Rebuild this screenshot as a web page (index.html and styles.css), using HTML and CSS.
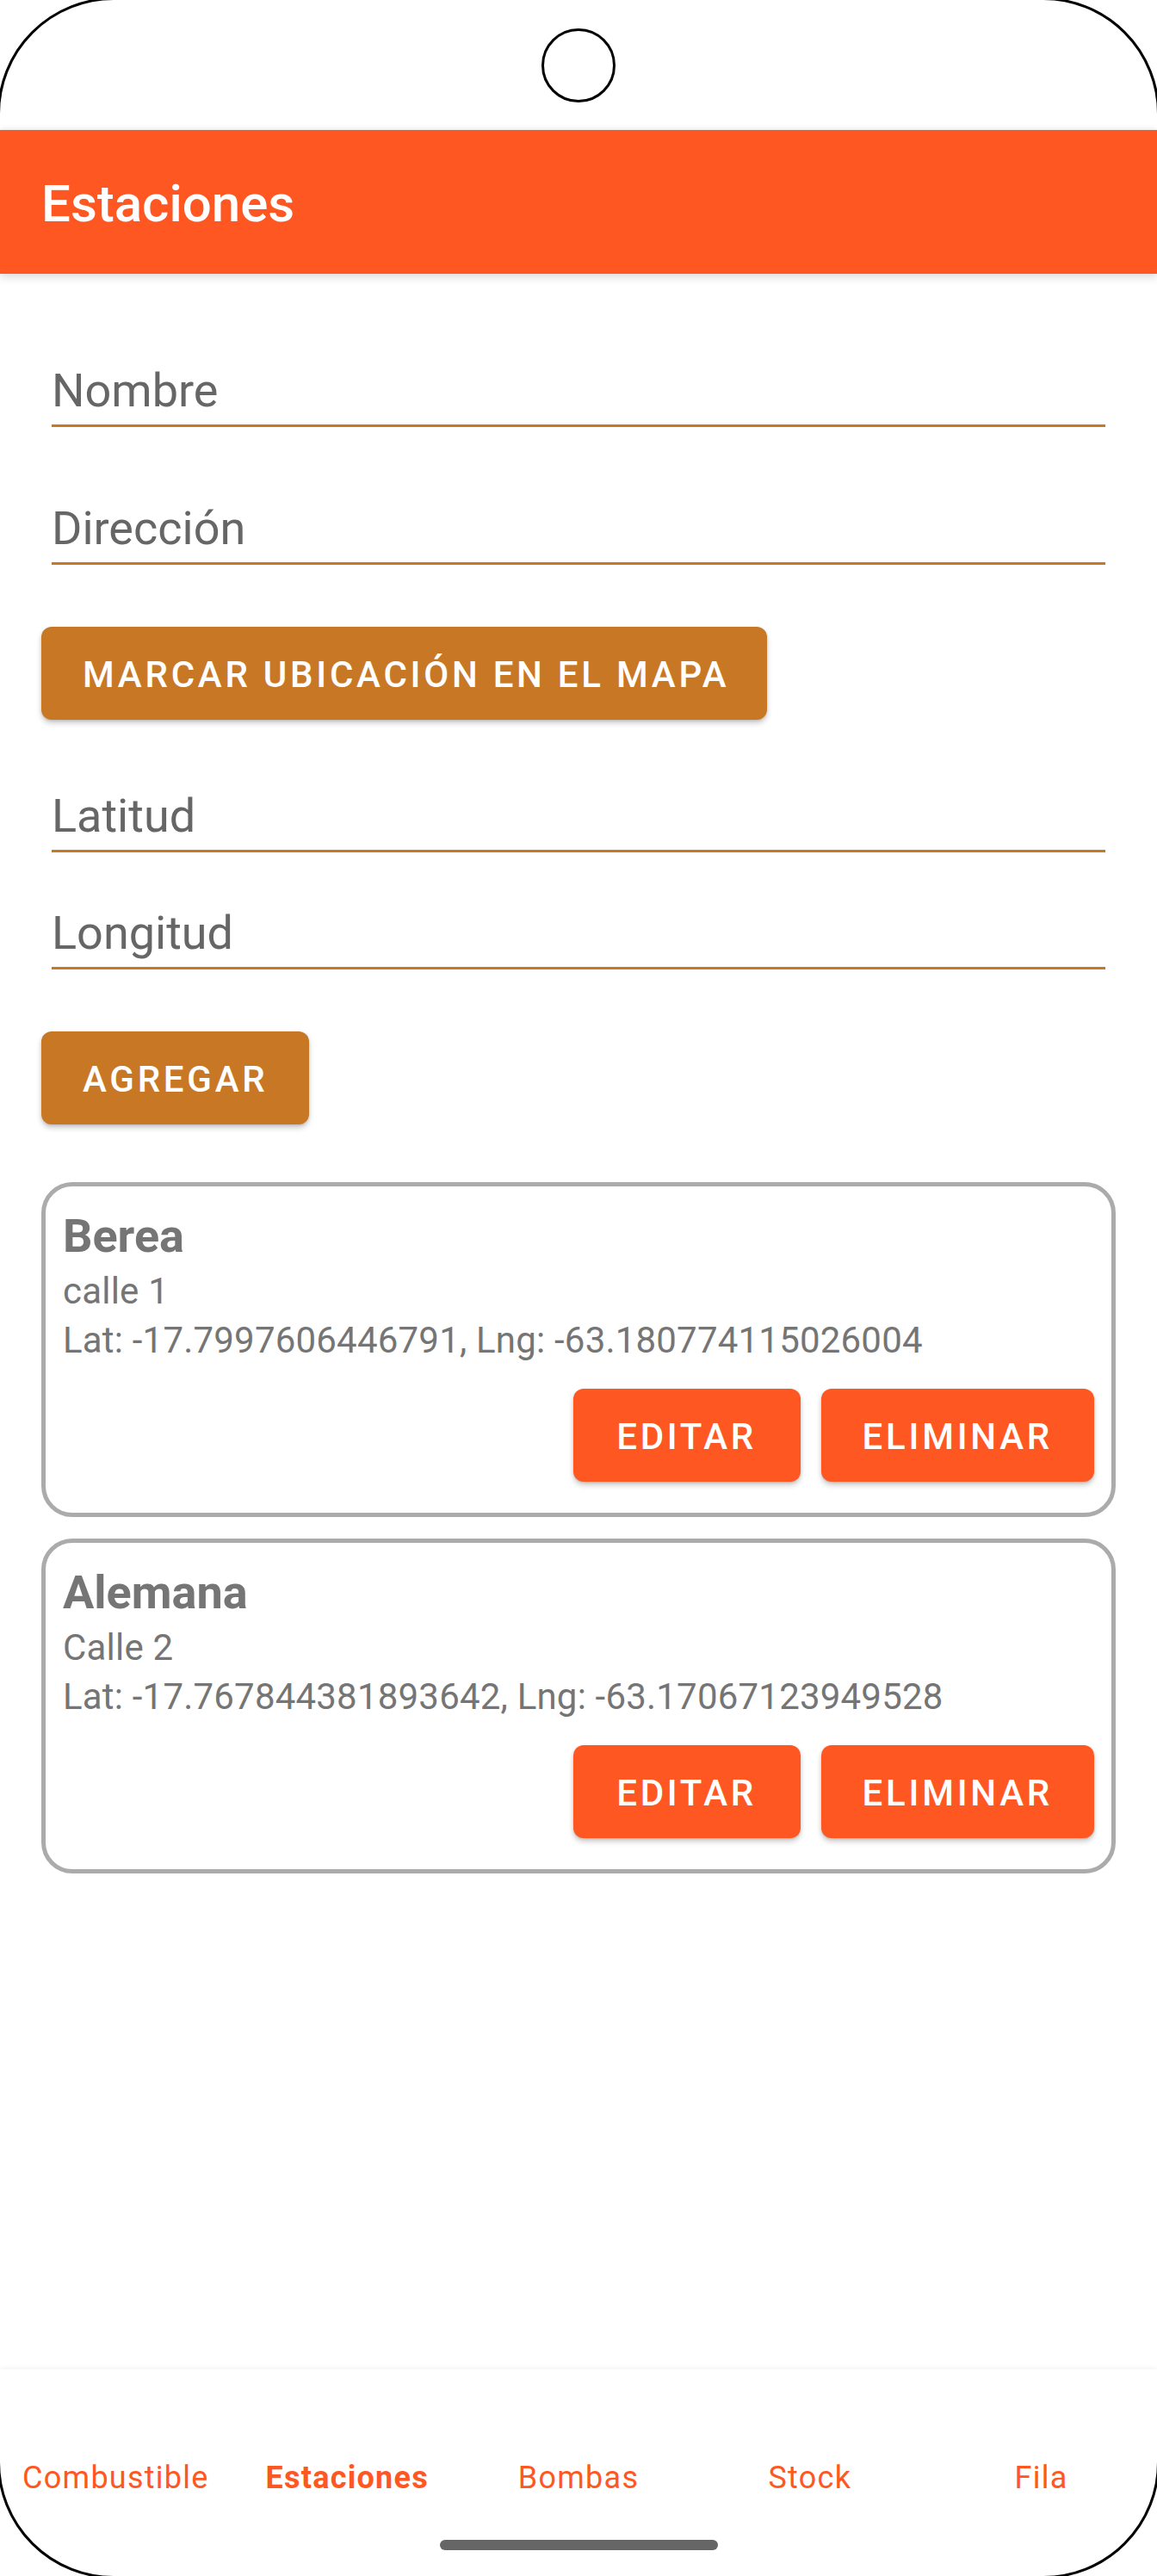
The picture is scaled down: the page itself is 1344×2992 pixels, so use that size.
FILE: index.html
```html
<!DOCTYPE html>
<html lang="es">
<head>
<meta charset="utf-8">
<title>Estaciones</title>
<link rel="stylesheet" href="styles.css">
</head>
<body>
<div class="phone">
  <div class="statusbar"><div class="camera"></div></div>
  <header class="appbar"><h1 class="appbar-title">Estaciones</h1></header>
  <main class="content">
    <form class="form">
      <div class="field field-nombre"><span class="hint">Nombre</span></div>
      <div class="field field-direccion"><span class="hint">Dirección</span></div>
      <button type="button" class="btn btn-brown btn-map">MARCAR UBICACIÓN EN EL MAPA</button>
      <div class="field field-lat"><span class="hint">Latitud</span></div>
      <div class="field field-lng"><span class="hint">Longitud</span></div>
      <button type="button" class="btn btn-brown btn-add">AGREGAR</button>
    </form>
    <section class="cards">
      <article class="card">
        <h2 class="card-title">Berea</h2>
        <p class="card-line">calle 1</p>
        <p class="card-line">Lat: -17.7997606446791, Lng: -63.180774115026004</p>
        <div class="card-actions">
          <button type="button" class="btn btn-red">EDITAR</button>
          <button type="button" class="btn btn-red">ELIMINAR</button>
        </div>
      </article>
      <article class="card">
        <h2 class="card-title">Alemana</h2>
        <p class="card-line">Calle 2</p>
        <p class="card-line">Lat: -17.767844381893642, Lng: -63.17067123949528</p>
        <div class="card-actions">
          <button type="button" class="btn btn-red">EDITAR</button>
          <button type="button" class="btn btn-red">ELIMINAR</button>
        </div>
      </article>
    </section>
  </main>
  <nav class="bottomnav">
    <div class="tabs">
      <span class="tab">Combustible</span>
      <span class="tab tab-active">Estaciones</span>
      <span class="tab">Bombas</span>
      <span class="tab">Stock</span>
      <span class="tab">Fila</span>
    </div>
    <div class="home-indicator"></div>
  </nav>
  <div class="frame"></div>
</div>
</body>
</html>
```
FILE: styles.css
```css
html, body {
  margin: 0;
  padding: 0;
  background: #fff;
}

body {
  font-family: Roboto, "Noto Sans", "Liberation Sans", sans-serif;
}

.phone {
  position: relative;
  width: 1344px;
  height: 2992px;
  display: flex;
  flex-direction: column;
  overflow: hidden;
  background: #fff;
}

.statusbar {
  flex: none;
  height: 151px;
  display: flex;
  justify-content: center;
  align-items: center;
}

.camera {
  width: 80px;
  height: 80px;
  border: 3px solid #000;
  border-radius: 50%;
}

.appbar {
  flex: none;
  position: relative;
  z-index: 1;
  height: 167px;
  box-sizing: border-box;
  padding: 4px 48px 0;
  display: flex;
  align-items: center;
  background: #FF5722;
  box-shadow: 0 4px 10px rgba(0, 0, 0, 0.14), 0 -2px 6px rgba(0, 0, 0, 0.05);
}

.appbar-title {
  margin: 0;
  font-size: 60px;
  line-height: 70px;
  font-weight: 500;
  color: #fff;
}

.content {
  flex: 1;
  min-height: 0;
  padding: 0 48px;
}

.form {
  display: flex;
  flex-direction: column;
  align-items: flex-start;
}

.field {
  align-self: stretch;
  margin: 0 12px;
  padding-bottom: 8px;
  border-bottom: 3px solid #C87825;
}

.hint {
  display: block;
  font-size: 54px;
  line-height: 63px;
  color: #666;
}

.field-nombre { margin-top: 104px; }
.field-direccion { margin-top: 86px; }
.btn-map { margin-top: 72px; }
.field-lat { margin-top: 80px; }
.field-lng { margin-top: 62px; }
.btn-add { margin-top: 72px; }

.btn {
  min-width: 264px;
  height: 108px;
  box-sizing: border-box;
  padding: 3px 48px 0;
  border: none;
  border-radius: 12px;
  display: flex;
  align-items: center;
  justify-content: center;
  font-family: Roboto, "Noto Sans", "Liberation Sans", sans-serif;
  font-size: 42px;
  line-height: 42px;
  font-weight: 500;
  letter-spacing: 0.0893em;
  color: #fff;
  box-shadow: 0 4px 6px rgba(0, 0, 0, 0.2), 0 1px 3px rgba(0, 0, 0, 0.12);
}

.btn-brown { background: #C87825; }
.btn-map { padding-right: 44px; }
.btn-red { background: #FF5722; }

.cards {
  margin-top: 67px;
  display: flex;
  flex-direction: column;
  gap: 25px;
}

.card {
  border: 5px solid #ababab;
  border-radius: 36px;
  padding: 26px 20px 36px;
}

.card-title {
  margin: 0;
  font-size: 54px;
  line-height: 63px;
  font-weight: 700;
  color: #757575;
}

.card-line {
  margin: 8px 0 0;
  font-size: 42px;
  line-height: 49px;
  letter-spacing: 0.2px;
  color: #757575;
}

.card-actions {
  margin-top: 32px;
  display: flex;
  justify-content: flex-end;
  gap: 24px;
}

.bottomnav {
  flex: none;
  height: 240px;
  display: flex;
  flex-direction: column;
  align-items: center;
  background: #fff;
  box-shadow: 0 -2px 6px rgba(0, 0, 0, 0.05);
}

.tabs {
  width: 100%;
  padding-top: 105px;
  display: grid;
  grid-template-columns: repeat(5, 1fr);
}

.tab {
  text-align: center;
  font-size: 36px;
  line-height: 42px;
  letter-spacing: 0.035em;
  color: #FF5722;
}

.tab-active { font-weight: 700; }

.home-indicator {
  margin-top: 51px;
  width: 323px;
  height: 12px;
  border-radius: 6px;
  background: #666;
}

.frame {
  position: absolute;
  top: -3px;
  left: -3px;
  right: -3px;
  bottom: -3px;
  border: 3px solid #000;
  border-radius: 135px;
  pointer-events: none;
  z-index: 5;
}
```
